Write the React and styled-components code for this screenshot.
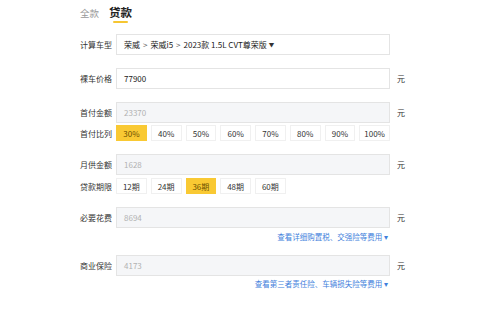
import styled, { createGlobalStyle } from "styled-components";

const PERCENTS = ["30%", "40%", "50%", "60%", "70%", "80%", "90%", "100%"];
const TERMS = ["12期", "24期", "36期", "48期", "60期"];

const GlobalStyle = createGlobalStyle`
  body {
    margin: 0;
    background: #fff;
    font-family: "Noto Sans CJK SC", "Noto Sans", sans-serif;
    color: #333;
  }
`;

const Page = styled.div`
  padding: 5px 0 0 80px;
`;

const Tabs = styled.div`
  display: flex;
  align-items: flex-start;
  gap: 10px;
  height: 18px;
`;

const Tab = styled.div`
  display: flex;
  flex-direction: column;
  align-items: center;
  font-size: ${({ $active }) => ($active ? "11.5px" : "9.5px")};
  font-weight: ${({ $active }) => ($active ? 700 : 400)};
  color: ${({ $active }) => ($active ? "#222" : "#999")};
  line-height: 14px;
  padding-top: ${({ $active }) => ($active ? "0" : "1px")};

  &::after {
    content: "";
    display: ${({ $active }) => ($active ? "block" : "none")};
    width: 15px;
    height: 2px;
    border-radius: 1px;
    margin-top: 2px;
    background: #f6c632;
  }
`;

const Form = styled.div`
  display: flex;
  flex-direction: column;
  gap: 13px;
  margin-top: 11px;
`;

const Group = styled.div`
  display: flex;
  flex-direction: column;
  gap: ${({ $gap }) => $gap || 0}px;
`;

const Row = styled.div`
  display: flex;
  align-items: center;
`;

const Label = styled.div`
  width: 36px;
  flex-shrink: 0;
  font-size: 8px;
  color: #333;
`;

const Field = styled.div`
  width: 274px;
  height: 21px;
  box-sizing: border-box;
  display: flex;
  align-items: center;
  padding: 0 7px;
  border: 1px solid #e4e4e4;
  background: ${({ $disabled }) => ($disabled ? "#f5f6f8" : "#fff")};
  color: ${({ $disabled }) => ($disabled ? "#b2b2b2" : "#222")};
  font-size: 8px;
`;

const Sep = styled.span`
  margin: 0 3px;
  color: #555;
`;

const Caret = styled.span`
  font-size: 5.5px;
  margin-left: 2px;
  color: #333;
`;

const Unit = styled.div`
  margin-left: 7px;
  font-size: 8px;
  color: #333;
`;

const Options = styled.div`
  width: 274px;
  display: grid;
  grid-template-columns: repeat(8, 1fr);
  gap: 4px;
`;

const Option = styled.div`
  height: 16px;
  box-sizing: border-box;
  display: flex;
  align-items: center;
  justify-content: center;
  font-size: 8px;
  border: 1px solid ${({ $active }) => ($active ? "#f9c933" : "#f0f0f0")};
  background: ${({ $active }) => ($active ? "#f9c933" : "#fff")};
  color: ${({ $active }) => ($active ? "#6b5000" : "#333")};
`;

const Link = styled.div`
  width: 308px;
  text-align: right;
  font-size: 7.5px;
  line-height: 10px;
  color: #3f7fdc;
`;

function App() {
  return (
    <Page>
      <GlobalStyle />
      <Tabs>
        <Tab>全款</Tab>
        <Tab $active>贷款</Tab>
      </Tabs>
      <Form>
        <Row>
          <Label>计算车型</Label>
          <Field>
            荣威<Sep>&gt;</Sep>荣威i5<Sep>&gt;</Sep>2023款 1.5L CVT尊荣版
            <Caret>▼</Caret>
          </Field>
        </Row>
        <Row>
          <Label>裸车价格</Label>
          <Field>77900</Field>
          <Unit>元</Unit>
        </Row>
        <Group $gap={2}>
          <Row>
            <Label>首付金额</Label>
            <Field $disabled>23370</Field>
            <Unit>元</Unit>
          </Row>
          <Row>
            <Label>首付比列</Label>
            <Options>
              {PERCENTS.map((p) => (
                <Option key={p} $active={p === "30%"}>
                  {p}
                </Option>
              ))}
            </Options>
          </Row>
        </Group>
        <Group $gap={3}>
          <Row>
            <Label>月供金额</Label>
            <Field $disabled>1628</Field>
            <Unit>元</Unit>
          </Row>
          <Row>
            <Label>贷款期限</Label>
            <Options>
              {TERMS.map((t) => (
                <Option key={t} $active={t === "36期"}>
                  {t}
                </Option>
              ))}
            </Options>
          </Row>
        </Group>
        <Group $gap={4}>
          <Row>
            <Label>必要花费</Label>
            <Field $disabled>8694</Field>
            <Unit>元</Unit>
          </Row>
          <Link>查看详细购置税、交强险等费用 ▾</Link>
        </Group>
        <Group $gap={3}>
          <Row>
            <Label>商业保险</Label>
            <Field $disabled>4173</Field>
            <Unit>元</Unit>
          </Row>
          <Link>查看第三者责任险、车辆损失险等费用 ▾</Link>
        </Group>
      </Form>
    </Page>
  );
}

export default App;
